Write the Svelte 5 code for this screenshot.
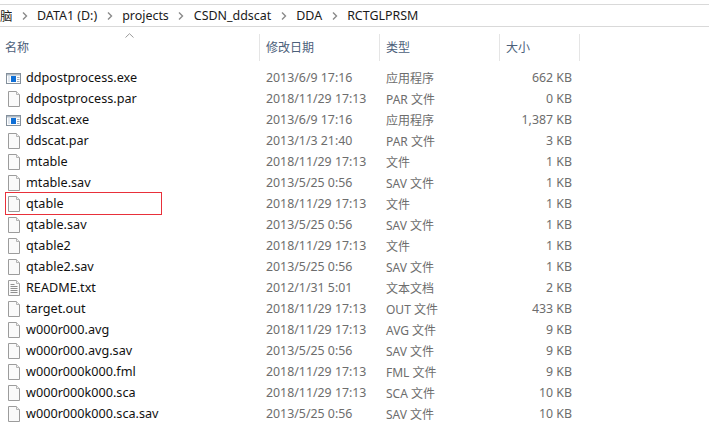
<script lang="ts">
	const crumbs = ['DATA1 (D:)', 'projects', 'CSDN_ddscat', 'DDA', 'RCTGLPRSM'];

	const columns = [
		{ label: '名称', cls: 'name' },
		{ label: '修改日期', cls: 'date' },
		{ label: '类型', cls: 'type' },
		{ label: '大小', cls: 'size' }
	];

	type Row = { name: string; date: string; type: string; size: string; icon: string; marked?: boolean };

	const files: Row[] = [
		{ name: 'ddpostprocess.exe', date: '2013/6/9 17:16', type: '应用程序', size: '662 KB', icon: 'exe' },
		{ name: 'ddpostprocess.par', date: '2018/11/29 17:13', type: 'PAR 文件', size: '0 KB', icon: 'file' },
		{ name: 'ddscat.exe', date: '2013/6/9 17:16', type: '应用程序', size: '1,387 KB', icon: 'exe' },
		{ name: 'ddscat.par', date: '2013/1/3 21:40', type: 'PAR 文件', size: '3 KB', icon: 'file' },
		{ name: 'mtable', date: '2018/11/29 17:13', type: '文件', size: '1 KB', icon: 'file' },
		{ name: 'mtable.sav', date: '2013/5/25 0:56', type: 'SAV 文件', size: '1 KB', icon: 'file' },
		{ name: 'qtable', date: '2018/11/29 17:13', type: '文件', size: '1 KB', icon: 'file', marked: true },
		{ name: 'qtable.sav', date: '2013/5/25 0:56', type: 'SAV 文件', size: '1 KB', icon: 'file' },
		{ name: 'qtable2', date: '2018/11/29 17:13', type: '文件', size: '1 KB', icon: 'file' },
		{ name: 'qtable2.sav', date: '2013/5/25 0:56', type: 'SAV 文件', size: '1 KB', icon: 'file' },
		{ name: 'README.txt', date: '2012/1/31 5:01', type: '文本文档', size: '2 KB', icon: 'txt' },
		{ name: 'target.out', date: '2018/11/29 17:13', type: 'OUT 文件', size: '433 KB', icon: 'file' },
		{ name: 'w000r000.avg', date: '2018/11/29 17:13', type: 'AVG 文件', size: '9 KB', icon: 'file' },
		{ name: 'w000r000.avg.sav', date: '2013/5/25 0:56', type: 'SAV 文件', size: '9 KB', icon: 'file' },
		{ name: 'w000r000k000.fml', date: '2018/11/29 17:13', type: 'FML 文件', size: '9 KB', icon: 'file' },
		{ name: 'w000r000k000.sca', date: '2018/11/29 17:13', type: 'SCA 文件', size: '10 KB', icon: 'file' },
		{ name: 'w000r000k000.sca.sav', date: '2013/5/25 0:56', type: 'SAV 文件', size: '10 KB', icon: 'file' }
	];
</script>

<div class="explorer">
	<nav class="crumbs">
		<span class="crumb crumb--cut">脑</span>
		{#each crumbs as crumb, i}
			<svg class="chevron" width="6" height="8" viewBox="0 0 6 8" aria-hidden="true">
				<path d="M1 0.5 L4.5 4 L1 7.5" fill="none" stroke="#8a8a8a" stroke-width="1.4" />
			</svg>
			<span class="crumb">{crumb}</span>
		{/each}
	</nav>

	<div class="sort-arrow">
		<svg width="9" height="5" viewBox="0 0 9 5" aria-hidden="true">
			<path d="M0.5 4.5 L4.5 0.7 L8.5 4.5" fill="none" stroke="#9a9a9a" stroke-width="1" />
		</svg>
	</div>

	<div class="head">
		{#each columns as col}
			<div class="head__cell head__cell--{col.cls}">{col.label}</div>
		{/each}
	</div>

	<ul class="list">
		{#each files as file (file.name)}
			<li class="row">
				<div class="cell-name" class:marked={file.marked}>
					{#if file.icon === 'exe'}
						<svg class="icon" width="16" height="16" viewBox="0 0 16 16" aria-hidden="true">
							<rect x="1.5" y="3.5" width="14" height="10" fill="#fdfdfd" stroke="#84909c" />
							<rect x="2" y="4" width="13" height="1.5" fill="#aeb9c4" />
							<rect x="6" y="6" width="5" height="6" fill="#0f6fd6" />
							<path d="M12 7.5 H14.5 M12 9.5 H14.5 M12 11.5 H14.5" stroke="#a3adb7" stroke-width="1" />
							<rect x="3" y="6" width="2" height="6" fill="#dfe6ee" />
						</svg>
					{:else}
						<svg class="icon" width="16" height="16" viewBox="0 0 16 16" aria-hidden="true">
							<path d="M3.5 0.5 H11.5 L14.5 3.5 V15.5 H3.5 Z" fill="#fafafa" stroke="#9c9c9c" />
							<path d="M11.5 0.5 V3.5 H14.5" fill="#f0f0f0" stroke="#b4b4b4" />
							{#if file.icon === 'txt'}
								<path d="M5.5 4.5 H9.5 M5.5 6.5 H12.5 M5.5 8.5 H12.5 M5.5 10.5 H12.5 M5.5 12.5 H12.5" stroke="#8f8f8f" stroke-width="1" />
							{/if}
						</svg>
					{/if}
					<span class="name">{file.name}</span>
				</div>
				<div class="cell cell--date">{file.date}</div>
				<div class="cell cell--type">{file.type}</div>
				<div class="cell cell--size">{file.size}</div>
			</li>
		{/each}
	</ul>
</div>

<style>
	:global(body) {
		background: #fff;
	}

	.explorer {
		position: relative;
		width: 709px;
		height: 439px;
		overflow: hidden;
		padding-top: 4px;
		box-sizing: border-box;
		background: #fff;
		font-family: 'Noto Sans', 'Noto Sans CJK SC', sans-serif;
		font-size: 12px;
	}

	.crumbs {
		display: flex;
		align-items: center;
		height: 21px;
		border-top: 1px solid #d9d9d9;
		border-bottom: 1px solid #d9d9d9;
		color: #1a1a1a;
		font-size: 12.45px;
		white-space: nowrap;
	}

	.crumb--cut {
		width: 12px;
		overflow: hidden;
	}

	.chevron {
		margin: 0 9.5px;
		flex-shrink: 0;
	}

	.sort-arrow {
		position: absolute;
		left: 125px;
		top: 33px;
		line-height: 0;
	}

	.head {
		display: grid;
		grid-template-columns: 260px 120px 120px 80px;
		height: 27px;
		margin-top: 7px;
		color: #4c607a;
	}

	.head__cell {
		padding-left: 5px;
		line-height: 27px;
		border-right: 1px solid #e5e5e5;
		box-sizing: border-box;
	}

	.head__cell--date,
	.head__cell--type,
	.head__cell--size {
		padding-left: 6px;
	}

	.list {
		list-style: none;
		margin: 6px 0 0;
		padding: 0;
	}

	.row {
		display: grid;
		grid-template-columns: 260px 120px 120px 72px;
		height: 21px;
		align-items: center;
	}

	.cell-name {
		display: flex;
		align-items: center;
		gap: 5px;
		height: 21px;
		padding-left: 5px;
		color: #111;
		font-size: 12.65px;
		position: relative;
	}

	.name {
		margin-top: -2px;
	}

	.marked::after {
		content: '';
		position: absolute;
		left: 5px;
		top: -1px;
		width: 157px;
		height: 23px;
		box-sizing: border-box;
		border: 1px solid #e8303a;
	}

	.icon {
		flex-shrink: 0;
	}

	.cell {
		color: #6d6d6d;
		font-size: 12.35px;
		white-space: nowrap;
		padding-left: 6px;
	}

	.cell--type {
		font-size: 12px;
	}

	.cell--size {
		text-align: right;
		padding-left: 0;
	}
</style>
